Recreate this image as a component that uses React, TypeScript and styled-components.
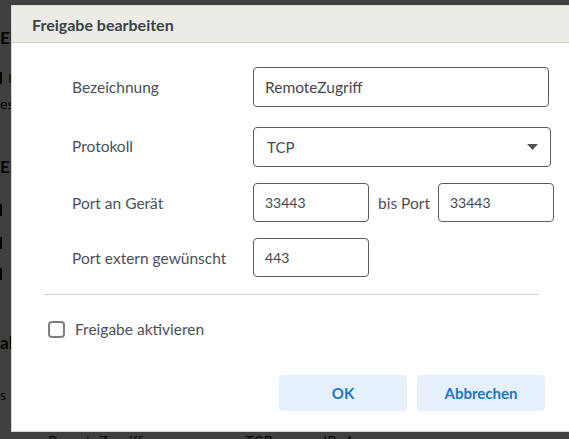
import React from "react";
import styled, { createGlobalStyle } from "styled-components";

const GlobalStyle = createGlobalStyle`
  html, body { margin: 0; padding: 0; }
  body {
    font-family: "Lato", "Open Sans", "Liberation Sans", sans-serif;
    background: #ffffff;
    overflow: hidden;
  }
  * { box-sizing: border-box; }
`;

/* ---------- background page ---------- */

const Page = styled.div`
  width: 569px;
  height: 439px;
  display: flex;
  flex-direction: column;
  color: #111;
  overflow: hidden;
`;

const PageHeading = styled.div<{ $top: number }>`
  margin-top: ${(p) => p.$top}px;
  font-size: 17px;
  font-weight: 700;
  line-height: 20px;
  white-space: nowrap;
`;

const PageText = styled.div<{ $top: number }>`
  margin-top: ${(p) => p.$top}px;
  font-size: 14px;
  line-height: 16px;
  white-space: nowrap;
`;

const PageBarRow = styled.div<{ $top: number }>`
  margin-top: ${(p) => p.$top}px;
  display: flex;
  align-items: center;
  gap: 7px;
  height: 12px;
`;

const PageBar = styled.span`
  width: 2px;
  height: 12px;
  background: #111;
`;

const PageOrange = styled.span`
  width: 6px;
  height: 9px;
  background: #a0642a;
`;

const PageLine = styled.div<{ $top: number }>`
  margin-top: ${(p) => p.$top}px;
  height: 1px;
  background: #e0e0e0;
`;

const PageTableRow = styled.div<{ $top: number }>`
  margin-top: ${(p) => p.$top}px;
  display: grid;
  grid-template-columns: 197px 78px auto;
  padding-left: 48px;
  font-size: 15px;
  line-height: 18px;
  color: #222;
`;

/* ---------- overlay + dialog ---------- */

const Overlay = styled.div`
  position: fixed;
  inset: 0;
  background: rgba(0, 0, 0, 0.75);
`;

const Dialog = styled.div`
  position: fixed;
  left: 11px;
  top: 5px;
  width: 560px;
  height: 427px;
  background: #ffffff;
  border: 1px solid #d6d6d6;
  display: flex;
  flex-direction: column;
  color: #4b5057;
`;

const DialogHeader = styled.div`
  height: 37px;
  flex: none;
  background: #ecebe5;
  border-bottom: 1px solid #d2d2ce;
  display: flex;
  align-items: center;
  padding-left: 20px;
  font-size: 16px;
  font-weight: 700;
  color: #3b424a;
`;

const DialogBody = styled.div`
  display: flex;
  flex-direction: column;
  padding: 24px 25px 0 32px;
`;

const FormGrid = styled.div`
  display: grid;
  grid-template-columns: 181px auto;
  row-gap: 16px;
  padding-left: 28px;
`;

const Label = styled.div<{ $shift?: number }>`
  display: flex;
  align-items: center;
  font-size: 15.5px;
  color: #4b5057;
  white-space: nowrap;
  margin-top: ${(p) => p.$shift ?? 0}px;
`;

const FieldRow = styled.div<{ $shift?: number }>`
  display: flex;
  align-items: center;
  gap: 9px;
  margin-top: ${(p) => p.$shift ?? 0}px;
`;

const TextInput = styled.div<{ $w: number; $h?: number }>`
  width: ${(p) => p.$w}px;
  height: ${(p) => p.$h ?? 40}px;
  flex: none;
  border: 1px solid #595d62;
  border-radius: 4px;
  display: flex;
  align-items: center;
  padding-left: 11px;
  font-size: 15.5px;
  color: #43474c;
`;

const SmallInput = styled(TextInput)`
  font-size: 14px;
  padding-left: 11px;
`;

const Select = styled(TextInput)`
  justify-content: space-between;
  padding: 0 12px 0 13px;
  font-size: 15px;
`;

const Caret = styled.svg`
  width: 11px;
  height: 6px;
`;

const BisLabel = styled.span`
  font-size: 15.5px;
  color: #4b5057;
  white-space: nowrap;
  margin-right: -1px;
`;

const Divider = styled.div`
  margin-top: 17px;
  width: 494px;
  height: 1px;
  background: #d0d0d0;
  align-self: flex-start;
`;

const CheckRow = styled.label`
  margin-top: 25px;
  display: flex;
  align-items: center;
  gap: 10px;
  padding-left: 4px;
  font-size: 15.5px;
  color: #4b5057;
`;

const CheckBox = styled.span`
  width: 17px;
  height: 17px;
  border: 2px solid #7b7f84;
  border-radius: 4px;
  background: #fff;
`;

const ButtonRow = styled.div`
  margin-top: 37px;
  display: flex;
  justify-content: flex-end;
  gap: 10px;
`;

const Button = styled.button`
  width: 128px;
  height: 36px;
  border: none;
  border-radius: 4px;
  background: #e6f0fa;
  color: #1f74c7;
  font-family: inherit;
  font-size: 15px;
  font-weight: 700;
  cursor: pointer;
`;

export default function App() {
  return (
    <>
      <GlobalStyle />
      <Page>
        <PageHeading $top={28}>Ei</PageHeading>
        <PageBarRow $top={24}>
          <PageBar />
          <PageOrange />
        </PageBarRow>
        <PageText $top={12}>es</PageText>
        <PageLine $top={18} />
        <PageHeading $top={27}>Ei</PageHeading>
        <PageBarRow $top={27}>
          <PageBar />
        </PageBarRow>
        <PageBarRow $top={21}>
          <PageBar />
        </PageBarRow>
        <PageBarRow $top={19}>
          <PageBar />
        </PageBarRow>
        <PageLine $top={26} />
        <PageHeading $top={27}>al</PageHeading>
        <PageLine $top={25} />
        <PageText $top={9}>s</PageText>
        <PageLine $top={11} />
        <PageTableRow $top={18}>
          <span>RemoteZugriff</span>
          <span>TCP</span>
          <span>IPv4</span>
        </PageTableRow>
      </Page>

      <Overlay />
      <Dialog>
        <DialogHeader>Freigabe bearbeiten</DialogHeader>
        <DialogBody>
          <FormGrid>
            <Label>Bezeichnung</Label>
            <TextInput $w={296}>RemoteZugriff</TextInput>

            <Label $shift={2}>Protokoll</Label>
            <Select $w={298} style={{ marginTop: 4 }}>
              TCP
              <Caret viewBox="0 0 11 6">
                <path d="M0 0 H11 L5.5 6 Z" fill="#50555b" />
              </Caret>
            </Select>

            <Label>Port an Gerät</Label>
            <FieldRow>
              <SmallInput $w={116} $h={39}>33443</SmallInput>
              <BisLabel>bis Port</BisLabel>
              <SmallInput $w={116} $h={39}>33443</SmallInput>
            </FieldRow>

            <Label>Port extern gewünscht</Label>
            <FieldRow>
              <SmallInput $w={116} $h={39}>443</SmallInput>
            </FieldRow>
          </FormGrid>
          <Divider />
          <CheckRow>
            <CheckBox />
            Freigabe aktivieren
          </CheckRow>
          <ButtonRow>
            <Button>OK</Button>
            <Button>Abbrechen</Button>
          </ButtonRow>
        </DialogBody>
      </Dialog>
    </>
  );
}
